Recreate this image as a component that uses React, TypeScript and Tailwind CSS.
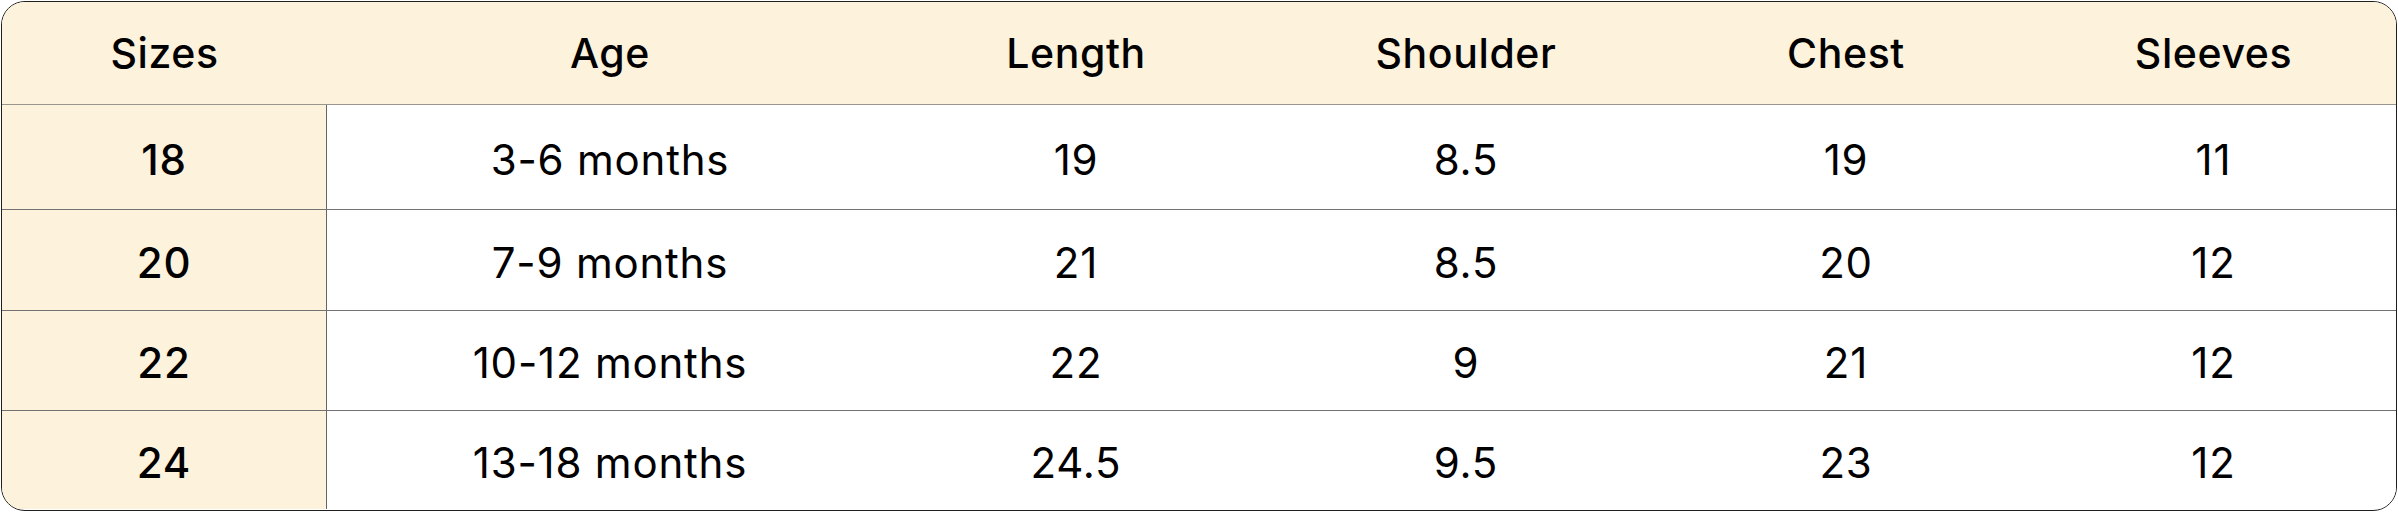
import React from "react";

const headers = ["Sizes", "Age", "Length", "Shoulder", "Chest", "Sleeves"];

const rows = [
  ["18", "3-6 months", "19", "8.5", "19", "11"],
  ["20", "7-9 months", "21", "8.5", "20", "12"],
  ["22", "10-12 months", "22", "9", "21", "12"],
  ["24", "13-18 months", "24.5", "9.5", "23", "12"],
];

const rowHeights = ["h-[105px]", "h-[101px]", "h-[100px]", "h-[98px]"];

const App: React.FC = () => {
  return (
    <div
      className="w-[2398px] h-[512px] bg-white p-px"
      style={{ fontFamily: "Inter, 'Noto Sans', sans-serif" }}
    >
      <div className="w-[2396px] h-[510px] rounded-[24px] border-[1.5px] border-[#1f1f1f] overflow-hidden flex flex-col text-black">
        {/* Header */}
        <div className="grid grid-cols-[325px_566px_366px_414px_346px_1fr] h-[103px] bg-[#fdf2dc] border-b-[1.5px] border-[#9a968e] shrink-0">
          {headers.map((h, i) => (
            <div
              key={h}
              className={`flex items-center justify-center pt-[2px] text-[41px] font-medium tracking-[0.6px] ${
                i === 5 ? "pl-[12px]" : ""
              }`}
            >
              {h}
            </div>
          ))}
        </div>

        {/* Body */}
        {rows.map((row, ri) => (
          <div
            key={row[0]}
            className={`grid grid-cols-[325px_566px_366px_414px_346px_1fr] shrink-0 ${rowHeights[ri]} ${
              ri < rows.length - 1 ? "border-b-[1.5px] border-[#727272]" : ""
            }`}
          >
            {row.map((cell, ci) => (
              <div
                key={ci}
                className={`flex items-center justify-center pt-[4px] text-[42px] tracking-[0.8px] ${
                  ci === 0
                    ? "bg-[#fdf2dc] border-r-[1.5px] border-[#666] font-medium"
                    : "bg-white font-normal"
                } ${ci === 5 ? "pl-[12px]" : ""}`}
              >
                {cell}
              </div>
            ))}
          </div>
        ))}
      </div>
    </div>
  );
};

export default App;
